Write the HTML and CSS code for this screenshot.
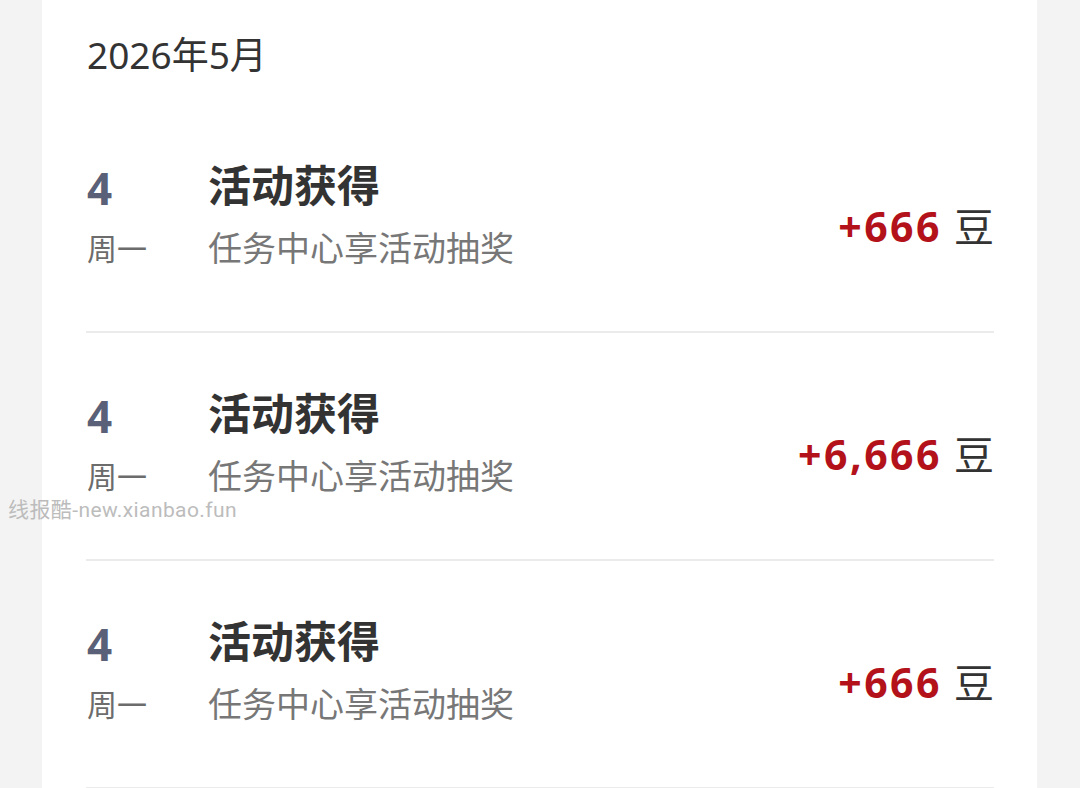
FILE: index.html
```html
<!DOCTYPE html>
<html lang="zh-CN">

<head>
    <meta charset="UTF-8">
    <meta name="viewport" content="width=device-width, initial-scale=1.0">
    <title>豆明细</title>
    <link rel="stylesheet" href="styles.css">
</head>

<body>

    <div class="card">
        <div class="month">2026年5月</div>

        <div class="record">
            <div class="day">
                <span class="day-num">4</span>
                <span class="day-week">周一</span>
            </div>
            <div class="info">
                <span class="info-title">活动获得</span>
                <span class="info-desc">任务中心享活动抽奖</span>
            </div>
            <div class="amount">
                <span class="amount-num">+666</span>
                <span class="amount-unit">豆</span>
            </div>
        </div>

        <div class="record">
            <div class="day">
                <span class="day-num">4</span>
                <span class="day-week">周一</span>
            </div>
            <div class="info">
                <span class="info-title">活动获得</span>
                <span class="info-desc">任务中心享活动抽奖</span>
            </div>
            <div class="amount">
                <span class="amount-num">+6,666</span>
                <span class="amount-unit">豆</span>
            </div>
        </div>

        <div class="record">
            <div class="day">
                <span class="day-num">4</span>
                <span class="day-week">周一</span>
            </div>
            <div class="info">
                <span class="info-title">活动获得</span>
                <span class="info-desc">任务中心享活动抽奖</span>
            </div>
            <div class="amount">
                <span class="amount-num">+666</span>
                <span class="amount-unit">豆</span>
            </div>
        </div>
    </div>

    <div class="watermark">线报酷-new.xianbao.fun</div>

</body>

</html>
```

FILE: styles.css
```css
    body {
        background: #f3f3f3;
        color: #333;
        font-family: "Noto Sans", "Noto Sans CJK SC", sans-serif;
        margin: 0;
        padding: 0;
        height: 788px;
        overflow: hidden;
    }

    .card {
        background: #fff;
        margin-left: 42px;
        width: 995px;
        box-sizing: border-box;
        padding: 0 43px 0 44px;
        height: 788px;
    }

    .month {
        font-size: 37px;
        line-height: 50px;
        padding: 30px 0 25px 1px;
        color: #333;
    }

    .record {
        display: flex;
        align-items: center;
        height: 228px;
        box-sizing: border-box;
        border-bottom: 2px solid #ebebeb;
    }

    .day {
        width: 121px;
        display: flex;
        flex-direction: column;
        padding: 0 0 12px 1px;
    }

    .day-num {
        font-size: 44px;
        font-weight: 700;
        line-height: 64px;
        color: #596077;
    }

    .day-week {
        font-size: 30px;
        line-height: 36px;
        margin-top: 12px;
        color: #6c6c6c;
        font-family: "Liberation Sans", "Noto Sans CJK SC", sans-serif;
    }

    .info {
        flex: 1;
        display: flex;
        flex-direction: column;
        font-family: "Noto Sans CJK SC", sans-serif;
    }

    .info-title {
        font-size: 43px;
        font-weight: 700;
        line-height: 58px;
        color: #333;
    }

    .info-desc {
        font-size: 34px;
        line-height: 70px;
        color: #777;
    }

    .amount {
        display: flex;
        align-items: baseline;
        gap: 12px;
        padding-top: 14px;
    }

    .amount-num {
        font-size: 41px;
        font-weight: 700;
        letter-spacing: 2.5px;
        color: #b3121b;
    }

    .amount-unit {
        font-size: 40px;
        color: #333;
        font-family: "Noto Sans CJK SC", sans-serif;
    }

    .watermark {
        position: absolute;
        left: 8px;
        top: 499px;
        font-size: 21px;
        line-height: 22px;
        letter-spacing: 0.4px;
        color: #bcbcbc;
        font-family: Roboto, "Noto Sans CJK SC", sans-serif;
    }
```
